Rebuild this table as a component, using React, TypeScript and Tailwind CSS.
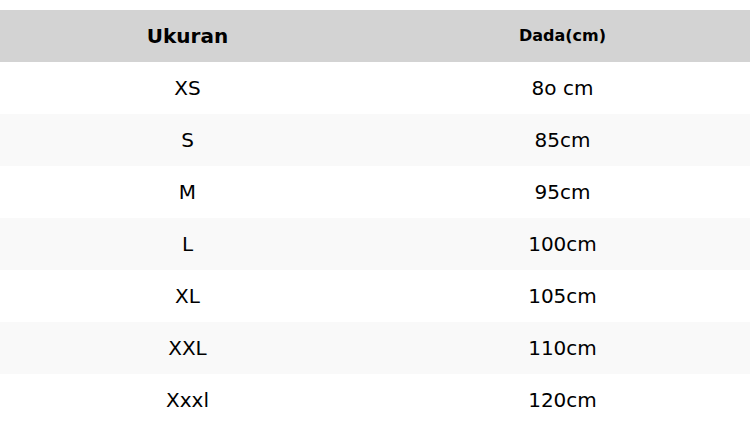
const ROWS: [string, string][] = [
  ['XS', '8o cm'],
  ['S', '85cm'],
  ['M', '95cm'],
  ['L', '100cm'],
  ['XL', '105cm'],
  ['XXL', '110cm'],
  ['Xxxl', '120cm'],
]

export default function App() {
  return (
    <div className="pt-[10px] bg-white text-black" style={{ fontFamily: '"DejaVu Sans", sans-serif' }}>
      <table className="w-full border-collapse table-fixed">
        <thead>
          <tr className="bg-[#d3d3d3] h-[52px]">
            <th className="text-center text-[20px] font-bold">Ukuran</th>
            <th className="text-center text-[16px] font-bold">Dada(cm)</th>
          </tr>
        </thead>
        <tbody>
          {ROWS.map(([size, chest], i) => (
            <tr key={size} className={`h-[52px] ${i % 2 === 1 ? 'bg-[#f9f9f9]' : 'bg-white'}`}>
              <td className="text-center text-[20px]">{size}</td>
              <td className="text-center text-[20px]">{chest}</td>
            </tr>
          ))}
        </tbody>
      </table>
    </div>
  )
}
